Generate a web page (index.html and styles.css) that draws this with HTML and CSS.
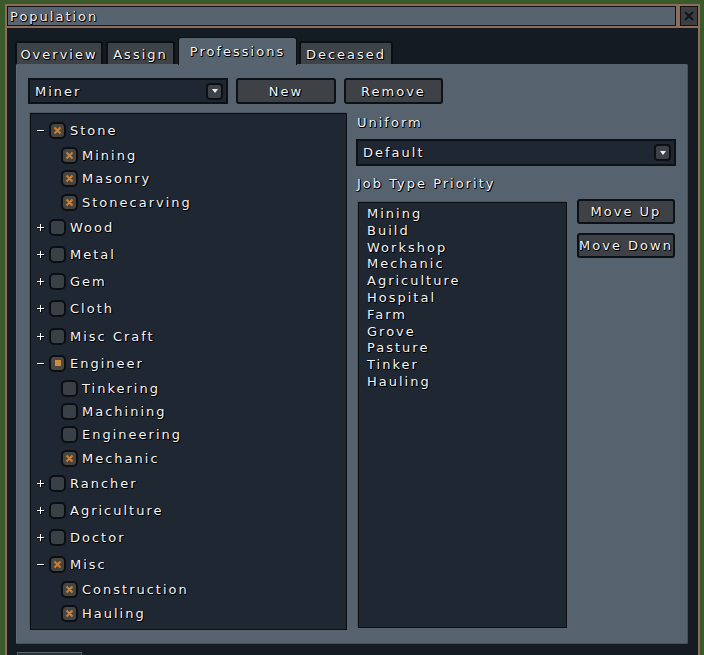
FILE: index.html
```html
<!DOCTYPE html>
<html>
<head>
<meta charset="utf-8">
<link rel="stylesheet" href="styles.css">
</head>
<body>
<div class="window">
  <div class="titlerow">
    <div class="titlebar"><span class="txt">Population</span></div>
    <div class="close"><svg width="10" height="10" viewBox="0 0 10 10"><path d="M1 1l8 8M9 1l-8 8" stroke="#121519" stroke-width="2"/></svg></div>
  </div>
  <div class="wbody">
    <div class="tabs">
      <div class="tab t-overview">Overview</div>
      <div class="tab t-assign">Assign</div>
      <div class="tab active t-prof">Professions</div>
      <div class="tab t-dec">Deceased</div>
    </div>
    <div class="panel">
      <div class="toprow">
        <div class="select miner"><span class="txt">Miner</span><span class="arrow"></span></div>
        <div class="btn b-new">New</div>
        <div class="btn b-remove">Remove</div>
      </div>
      <div class="main">
        <div class="tree">
          <div class="row"><span class="tog"><svg width="7" height="7" viewBox="0 0 7 7"><path d="M0 3h7v1H0z" fill="#fff"/></svg></span><span class="cb on"><svg width="13" height="13" viewBox="0 0 13 13"><path d="M3.5 3.5l6 6M9.5 3.5l-6 6" stroke="#c8803e" stroke-width="2"/></svg></span><span class="txt">Stone</span></div>
          <div class="row child"><span class="cb on"><svg width="13" height="13" viewBox="0 0 13 13"><path d="M3.5 3.5l6 6M9.5 3.5l-6 6" stroke="#c8803e" stroke-width="2"/></svg></span><span class="txt">Mining</span></div>
          <div class="row child"><span class="cb on"><svg width="13" height="13" viewBox="0 0 13 13"><path d="M3.5 3.5l6 6M9.5 3.5l-6 6" stroke="#c8803e" stroke-width="2"/></svg></span><span class="txt">Masonry</span></div>
          <div class="row child"><span class="cb on"><svg width="13" height="13" viewBox="0 0 13 13"><path d="M3.5 3.5l6 6M9.5 3.5l-6 6" stroke="#c8803e" stroke-width="2"/></svg></span><span class="txt">Stonecarving</span></div>
          <div class="row"><span class="tog"><svg width="7" height="7" viewBox="0 0 7 7"><path d="M0 3h7v1H0zM3 0h1v7H3z" fill="#fff"/></svg></span><span class="cb"></span><span class="txt">Wood</span></div>
          <div class="row"><span class="tog"><svg width="7" height="7" viewBox="0 0 7 7"><path d="M0 3h7v1H0zM3 0h1v7H3z" fill="#fff"/></svg></span><span class="cb"></span><span class="txt">Metal</span></div>
          <div class="row"><span class="tog"><svg width="7" height="7" viewBox="0 0 7 7"><path d="M0 3h7v1H0zM3 0h1v7H3z" fill="#fff"/></svg></span><span class="cb"></span><span class="txt">Gem</span></div>
          <div class="row"><span class="tog"><svg width="7" height="7" viewBox="0 0 7 7"><path d="M0 3h7v1H0zM3 0h1v7H3z" fill="#fff"/></svg></span><span class="cb"></span><span class="txt">Cloth</span></div>
          <div class="row"><span class="tog"><svg width="7" height="7" viewBox="0 0 7 7"><path d="M0 3h7v1H0zM3 0h1v7H3z" fill="#fff"/></svg></span><span class="cb"></span><span class="txt">Misc Craft</span></div>
          <div class="row"><span class="tog"><svg width="7" height="7" viewBox="0 0 7 7"><path d="M0 3h7v1H0z" fill="#fff"/></svg></span><span class="cb part"><span class="sq"></span></span><span class="txt">Engineer</span></div>
          <div class="row child"><span class="cb"></span><span class="txt">Tinkering</span></div>
          <div class="row child"><span class="cb"></span><span class="txt">Machining</span></div>
          <div class="row child"><span class="cb"></span><span class="txt">Engineering</span></div>
          <div class="row child"><span class="cb on"><svg width="13" height="13" viewBox="0 0 13 13"><path d="M3.5 3.5l6 6M9.5 3.5l-6 6" stroke="#c8803e" stroke-width="2"/></svg></span><span class="txt">Mechanic</span></div>
          <div class="row"><span class="tog"><svg width="7" height="7" viewBox="0 0 7 7"><path d="M0 3h7v1H0zM3 0h1v7H3z" fill="#fff"/></svg></span><span class="cb"></span><span class="txt">Rancher</span></div>
          <div class="row"><span class="tog"><svg width="7" height="7" viewBox="0 0 7 7"><path d="M0 3h7v1H0zM3 0h1v7H3z" fill="#fff"/></svg></span><span class="cb"></span><span class="txt">Agriculture</span></div>
          <div class="row"><span class="tog"><svg width="7" height="7" viewBox="0 0 7 7"><path d="M0 3h7v1H0zM3 0h1v7H3z" fill="#fff"/></svg></span><span class="cb"></span><span class="txt">Doctor</span></div>
          <div class="row"><span class="tog"><svg width="7" height="7" viewBox="0 0 7 7"><path d="M0 3h7v1H0z" fill="#fff"/></svg></span><span class="cb on"><svg width="13" height="13" viewBox="0 0 13 13"><path d="M3.5 3.5l6 6M9.5 3.5l-6 6" stroke="#c8803e" stroke-width="2"/></svg></span><span class="txt">Misc</span></div>
          <div class="row child"><span class="cb on"><svg width="13" height="13" viewBox="0 0 13 13"><path d="M3.5 3.5l6 6M9.5 3.5l-6 6" stroke="#c8803e" stroke-width="2"/></svg></span><span class="txt">Construction</span></div>
          <div class="row child"><span class="cb on"><svg width="13" height="13" viewBox="0 0 13 13"><path d="M3.5 3.5l6 6M9.5 3.5l-6 6" stroke="#c8803e" stroke-width="2"/></svg></span><span class="txt">Hauling</span></div>
        </div>
        <div class="right">
          <div class="label">Uniform</div>
          <div class="select uniform"><span class="txt">Default</span><span class="arrow"></span></div>
          <div class="label label2">Job Type Priority</div>
          <div class="jobs">
            <div class="list">
              <div class="item">Mining</div>
              <div class="item">Build</div>
              <div class="item">Workshop</div>
              <div class="item">Mechanic</div>
              <div class="item">Agriculture</div>
              <div class="item">Hospital</div>
              <div class="item">Farm</div>
              <div class="item">Grove</div>
              <div class="item">Pasture</div>
              <div class="item">Tinker</div>
              <div class="item">Hauling</div>
            </div>
            <div class="side">
              <div class="btn b-move">Move Up</div>
              <div class="btn b-move b-down">Move Down</div>
            </div>
          </div>
        </div>
      </div>
    </div>
    <div class="stub"></div>
  </div>
</div>
</body>
</html>
```
FILE: styles.css
```css
html, body {
  margin: 0;
  padding: 0;
  width: 704px;
  height: 655px;
  overflow: hidden;
}
body {
  background: #3b5a2c;
  font-family: "DejaVu Sans", Verdana, sans-serif;
  font-size: 13px;
  letter-spacing: 2px;
  color: #f6f6f6;
  text-shadow: 1px 1px 0 #000, 1px 0 0 #000, 0 1px 0 #000;
}
.window {
  margin: 4px 0 0 5px;
  width: 695px;
}
.titlerow {
  display: flex;
  height: 24px;
}
.titlebar {
  flex: 1;
  box-sizing: border-box;
  border: 2px solid #8d6c58;
  box-shadow: inset 0 0 0 1px #101418;
  background: #57646f;
  display: flex;
  align-items: center;
  padding-left: 3px;
}
.close {
  width: 22px;
  box-sizing: border-box;
  border: 2px solid #8d6c58;
  box-shadow: inset 0 0 0 1px #101418;
  background: #3b3f44;
  display: flex;
  align-items: center;
  justify-content: center;
}
.wbody {
  height: 640px;
  box-sizing: border-box;
  border-left: 2px solid #8d6c58;
  border-right: 2px solid #8d6c58;
  background: #151b22;
  padding: 0 10px 0 9px;
}
.tabs {
  display: flex;
  align-items: flex-end;
  gap: 3px;
  height: 36px;
  margin-left: -1px;
}
.tab {
  box-sizing: border-box;
  height: 23px;
  background: #3e4347;
  border: 2px solid #0c0f13;
  border-bottom: none;
  border-radius: 3px 3px 0 0;
  display: flex;
  align-items: center;
  justify-content: center;
  padding-top: 2px;
}
.t-overview { width: 88px; }
.t-assign { width: 69px; }
.t-prof { width: 119px; }
.t-dec { width: 94px; margin-left: -1px; }
.tab.active {
  height: 28px;
  background: #57646f;
  border-width: 1px;
  margin-bottom: -1px;
  align-items: flex-start;
  padding-top: 6px;
  position: relative;
}
.panel {
  height: 580px;
  box-sizing: border-box;
  background: #56636f;
  border-radius: 2px;
  box-shadow: inset -1px -1px 0 #44505b, inset 1px 0 0 #5f6c78;
  padding: 14px 12px;
  display: flex;
  flex-direction: column;
}
.toprow {
  display: flex;
  gap: 8px;
  height: 26px;
}
.select {
  box-sizing: border-box;
  background: #1f2733;
  border: 2px solid #0d1015;
  display: flex;
  align-items: center;
  justify-content: space-between;
  padding: 0 3px 0 5px;
}
.miner { width: 200px; }
.arrow {
  width: 17px;
  height: 17px;
  box-sizing: border-box;
  background: #3d4248;
  border: 2px solid #0c0f13;
  border-radius: 4px;
  display: flex;
  align-items: center;
  justify-content: center;
}
.arrow::after {
  content: "";
  border-left: 3px solid transparent;
  border-right: 3px solid transparent;
  border-top: 4px solid #f2f2f2;
}
.btn {
  box-sizing: border-box;
  background: #3e4246;
  border: 2px solid #0d1014;
  border-radius: 3px;
  display: flex;
  align-items: center;
  justify-content: center;
}
.b-new { width: 100px; }
.b-remove { width: 99px; }
.main {
  margin-top: 9px;
  display: grid;
  grid-template-columns: 320px 320px;
  column-gap: 8px;
  height: 517px;
}
.tree {
  margin-left: 2px;
  width: 317px;
  height: 517px;
  box-sizing: border-box;
  background: #1f2733;
  border: 1px solid #0c0f13;
  box-shadow: -1px -1px 0 #4a5560;
  padding-top: 3px;
}
.row {
  display: flex;
  align-items: center;
  height: 27.2px;
  padding-left: 6px;
}
.row.child {
  height: 23.2px;
  padding-left: 30px;
}
.tog {
  width: 8px;
  margin-right: 4px;
  display: flex;
  align-items: center;
  filter: drop-shadow(1px 1px 0 #000);
}
.cb {
  width: 17px;
  height: 17px;
  box-sizing: border-box;
  border: 2px solid #0b0e12;
  border-radius: 5px;
  background: #3b4046;
  margin-right: 4px;
  display: flex;
  align-items: center;
  justify-content: center;
  flex: none;
}
.cb.on { background: #47453f; }
.cb.part { background: #4d4741; }
.sq {
  width: 6px;
  height: 6px;
  background: #d28c3c;
}
.right {
  display: flex;
  flex-direction: column;
}
.label {
  height: 20px;
  line-height: 20px;
  padding-left: 1px;
}
.uniform {
  margin-top: 6px;
  height: 27px;
  padding-right: 3px;
}
.label2 { margin-top: 8px; }
.jobs {
  margin-top: 5px;
  display: flex;
}
.list {
  margin: 3px 0 0 2px;
  width: 209px;
  height: 426px;
  box-sizing: border-box;
  background: #1f2733;
  border: 1px solid #0c0f13;
  box-shadow: -1px -1px 0 #4a5560;
  padding: 3px 0 0 8px;
}
.item {
  line-height: 16.8px;
}
.side {
  margin-left: 10px;
  display: flex;
  flex-direction: column;
}
.b-move {
  width: 98px;
  height: 25px;
}
.b-down { margin-top: 9px; }
.stub {
  margin: 8px 0 0 1px;
  width: 65px;
  height: 10px;
  box-sizing: border-box;
  border: 1px solid #56616c;
  border-bottom: none;
  background: #2b3137;
}
```
